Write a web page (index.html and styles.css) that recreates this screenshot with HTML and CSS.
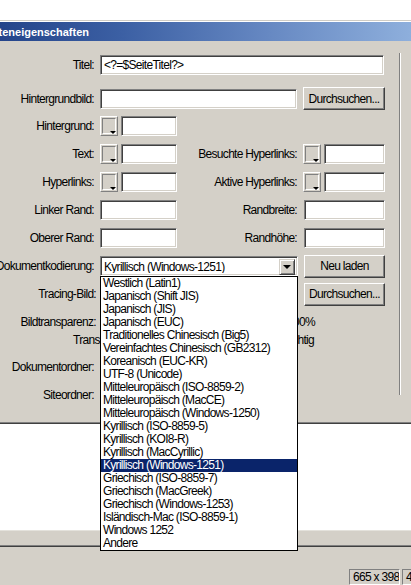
FILE: index.html
```html
<!DOCTYPE html>
<html lang="de">
<head>
<meta charset="utf-8">
<title>Seiteneigenschaften</title>
<link rel="stylesheet" href="styles.css">
</head>
<body>
<div class="top"></div>
<div class="titlebar"><span class="title">Seiteneigenschaften</span></div>
<div class="dialog">
  <div class="form">
    <div class="row ra">
      <div class="lbl">Titel:</div>
      <div class="inp w-title">&lt;?=$SeiteTitel?&gt;</div>
    </div>
    <div class="row rb">
      <div class="lbl">Hintergrundbild:</div>
      <div class="inp w-197"></div>
      <div class="btn w-82">Durchsuchen...</div>
    </div>
    <div class="row">
      <div class="lbl">Hintergrund:</div>
      <div class="sw"><span class="well"></span><span class="tri"></span></div>
      <div class="inp w-56"></div>
    </div>
    <div class="row">
      <div class="lbl">Text:</div>
      <div class="sw"><span class="well"></span><span class="tri"></span></div>
      <div class="inp w-56"></div>
      <div class="rlbl">Besuchte Hyperlinks:</div>
      <div class="sw"><span class="well"></span><span class="tri"></span></div>
      <div class="inp w-61"></div>
    </div>
    <div class="row">
      <div class="lbl">Hyperlinks:</div>
      <div class="sw"><span class="well"></span><span class="tri"></span></div>
      <div class="inp w-56"></div>
      <div class="rlbl">Aktive Hyperlinks:</div>
      <div class="sw"><span class="well"></span><span class="tri"></span></div>
      <div class="inp w-61"></div>
    </div>
    <div class="row">
      <div class="lbl">Linker Rand:</div>
      <div class="inp w-77"></div>
      <div class="rlbl">Randbreite:</div>
      <div class="inp w-81 gap7"></div>
    </div>
    <div class="row">
      <div class="lbl">Oberer Rand:</div>
      <div class="inp w-77"></div>
      <div class="rlbl">Randhöhe:</div>
      <div class="inp w-81 gap7"></div>
    </div>
    <div class="row">
      <div class="lbl">Dokumentkodierung:</div>
      <div class="select">
        <span class="seltext">Kyrillisch (Windows-1251)</span>
        <span class="arrow"><span class="dtri"></span></span>
      </div>
      <div class="btn w-81 gap6">Neu laden</div>
    </div>
    <div class="row">
      <div class="lbl lw">Tracing-Bild:</div>
      <div class="inp w-198x"></div>
      <div class="btn w-81 gap6">Durchsuchen...</div>
    </div>
    <div class="row">
      <div class="lbl lw">Bildtransparenz:</div>
      <div class="slider"></div>
      <div class="pct">100%</div>
    </div>
    <div class="row rk">
      <div class="tleft">Transparent</div>
      <div class="tright">Undurchsichtig</div>
    </div>
    <div class="row rl">
      <div class="lbl">Dokumentordner:</div>
    </div>
    <div class="row">
      <div class="lbl">Siteordner:</div>
    </div>
  </div>
</div>
<div class="sep"></div>
<div class="white"></div>
<div class="g1"></div>
<div class="sep"></div>
<div class="status">
  <div class="stbox">665 x 398</div>
  <div class="stbox small">4</div>
</div>
<div class="bbar"><div class="grip"><span class="utri"></span></div></div>

<div class="list">
  <div>Westlich (Latin1)</div>
  <div>Japanisch (Shift JIS)</div>
  <div>Japanisch (JIS)</div>
  <div>Japanisch (EUC)</div>
  <div>Traditionelles Chinesisch (Big5)</div>
  <div>Vereinfachtes Chinesisch (GB2312)</div>
  <div>Koreanisch (EUC-KR)</div>
  <div>UTF-8 (Unicode)</div>
  <div>Mitteleuropäisch (ISO-8859-2)</div>
  <div>Mitteleuropäisch (MacCE)</div>
  <div>Mitteleuropäisch (Windows-1250)</div>
  <div>Kyrillisch (ISO-8859-5)</div>
  <div>Kyrillisch (KOI8-R)</div>
  <div>Kyrillisch (MacCyrillic)</div>
  <div class="sel">Kyrillisch (Windows-1251)</div>
  <div>Griechisch (ISO-8859-7)</div>
  <div>Griechisch (MacGreek)</div>
  <div>Griechisch (Windows-1253)</div>
  <div>Isländisch-Mac (ISO-8859-1)</div>
  <div>Windows 1252</div>
  <div>Andere</div>
</div>
</body>
</html>
```

FILE: styles.css
```css
* { box-sizing: border-box; }
html, body { margin: 0; padding: 0; }
body {
  width: 411px;
  height: 585px;
  overflow: hidden;
  position: relative;
  background: #d4d0c8;
  color: #000;
  font-family: "Liberation Sans Narrow", "Liberation Sans", Arial, sans-serif;
  font-size: 12px;
  letter-spacing: -0.7px;
}
.top {
  height: 22px;
  background: linear-gradient(#fff 0 20px, #cfccc5 20px 21px, #fff 21px 22px);
}
.titlebar {
  height: 19px;
  display: flex;
  align-items: center;
  overflow: hidden;
  background: linear-gradient(90deg, #24448a 0%, #3c60a4 30%, #6688c2 65%, #8eafdc 100%);
  color: #fff;
  font: bold 11px "Liberation Sans", Arial, sans-serif;
  letter-spacing: 0;
}
.title { margin-left: -18px; white-space: nowrap; }
.dialog { height: 369px; }
.form {
  margin-top: 12px;
  width: 400px;
  height: 342px;
  border-right: 1px solid #808080;
  box-shadow: 1px 0 0 #fff;
}
.row { display: flex; align-items: center; height: 28px; }
.ra { height: 23px; }
.rb { height: 23px; margin-top: 11px; margin-bottom: 2px; }
.rk { height: 14px; margin-top: -3px; position: relative; }
.rl { margin-top: 6px; }
.lbl {
  width: 94px;
  flex: none;
  display: flex;
  justify-content: flex-end;
  margin-right: 6px;
  white-space: nowrap;
}
.lw { width: 96px; margin-right: 4px; }
.rlbl {
  width: 120px;
  flex: none;
  display: flex;
  justify-content: flex-end;
  margin-right: 6px;
  white-space: nowrap;
}
.inp {
  flex: none;
  height: 20px;
  background: #fff;
  border: 1px solid;
  border-color: #808080 #fff #fff #808080;
  box-shadow: inset 1px 1px #404040, inset -1px -1px #d4d0c8;
  padding-left: 3px;
  line-height: 18px;
  white-space: nowrap;
  overflow: hidden;
}
.w-title { width: 284px; }
.w-197 { width: 197px; margin-right: 6px; }
.w-198x { width: 198px; }
.w-56 { width: 56px; }
.w-61 { width: 61px; }
.w-77 { width: 77px; }
.w-81 { width: 81px; }
.w-82 { width: 82px; }
.gap7 { margin-left: 1px; }
.gap6 { margin-left: 6px; }
.btn {
  flex: none;
  height: 23px;
  display: flex;
  align-items: center;
  justify-content: center;
  background: #d4d0c8;
  border: 1px solid;
  border-color: #fff #404040 #404040 #fff;
  box-shadow: inset -1px -1px #808080;
  white-space: nowrap;
}
.sw {
  flex: none;
  width: 18px;
  height: 20px;
  margin-right: 3px;
  position: relative;
  border: 1px solid;
  border-color: #fff #808080 #808080 #fff;
  background: #d4d0c8;
  padding: 1px;
}
.well {
  display: block;
  width: 100%;
  height: 100%;
  border: 1px solid;
  border-color: #808080 #fff #fff #808080;
}
.tri {
  position: absolute;
  right: 1px;
  bottom: 1px;
  width: 0;
  height: 0;
  border-left: 3px solid transparent;
  border-right: 3px solid transparent;
  border-top: 3px solid #000;
}
.select {
  flex: none;
  width: 198px;
  height: 20px;
  display: flex;
  background: #fff;
  border: 1px solid;
  border-color: #808080 #fff #fff #808080;
  box-shadow: inset 1px 1px #404040, inset -1px -1px #d4d0c8;
  padding: 2px;
}
.seltext { flex: 1; padding-left: 1px; line-height: 16px; white-space: nowrap; overflow: hidden; }
.arrow {
  flex: none;
  width: 16px;
  height: 16px;
  display: flex;
  align-items: center;
  justify-content: center;
  background: #d4d0c8;
  border: 1px solid;
  border-color: #d4d0c8 #404040 #404040 #d4d0c8;
  box-shadow: inset 1px 1px #fff, inset -1px -1px #808080;
}
.dtri {
  width: 0; height: 0;
  border-left: 4px solid transparent;
  border-right: 4px solid transparent;
  border-top: 4px solid #000;
}
.slider { width: 187px; flex: none; }
.pct { white-space: nowrap; }
.tleft { position: absolute; left: 73px; top: 0; line-height: 14px; white-space: nowrap; }
.tright { position: absolute; right: 85px; top: 0; line-height: 14px; white-space: nowrap; }
.sep { height: 2px; border-top: 1px solid #808080; border-bottom: 1px solid #404040; }
.white { height: 107px; background: #fff; border-bottom: 1px solid #e4e2dc; }
.g1 { height: 14px; }
.status { height: 38px; display: flex; padding: 22px 0 0 349px; gap: 2px; }
.stbox {
  flex: none;
  width: 51px;
  height: 16px;
  border: 1px solid;
  border-color: #808080 #fff #fff #808080;
  padding-left: 3px;
  line-height: 14px;
  white-space: nowrap;
  overflow: hidden;
}
.stbox.small { width: 20px; }
.bbar {
  height: 12px;
  border-top: 1px solid #808080;
  display: flex;
  padding-left: 106px;
  position: relative;
}
.bbar::after {
  content: "";
  position: absolute;
  left: 0; right: 0; top: 8px;
  border-top: 1px solid #404040;
}
.grip {
  width: 50px;
  height: 9px;
  border: 1px solid #404040;
  border-top-color: #fff;
  background: #d4d0c8;
  display: flex;
  align-items: center;
  justify-content: center;
  position: relative;
  z-index: 1;
}
.utri {
  width: 0; height: 0;
  border-left: 4px solid transparent;
  border-right: 4px solid transparent;
  border-bottom: 3px solid #404040;
}
.list {
  position: absolute;
  left: 100px;
  top: 276px;
  width: 198px;
  border: 1px solid #000;
  background: #fff;
  z-index: 5;
}
.list div {
  height: 13px;
  line-height: 13px;
  padding-left: 2px;
  white-space: nowrap;
  overflow: hidden;
}
.list .sel { background: #0a246a; color: #fff; }
```
